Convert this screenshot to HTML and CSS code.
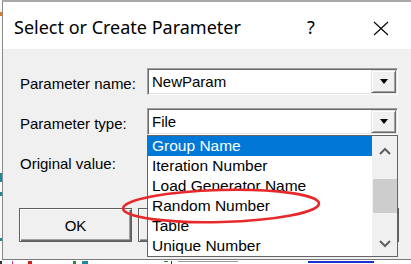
FILE: index.html
```html
<!DOCTYPE html>
<html lang="en">
<head>
  <meta charset="UTF-8" />
  <title>Select or Create Parameter</title>
  <link rel="stylesheet" href="styles.css">
</head>
<body>
<div class="screen">
  <!-- strip of the application window behind the dialog -->
  <div class="app-edge">
    <span class="mark orange"></span>
    <span class="mark teal first"></span>
    <span class="mark teal second"></span>
    <span class="mark teal third"></span>
  </div>

  <div class="dialog">
    <div class="titlebar">
      <span class="title">Select or Create Parameter</span>
      <span class="help">?</span>
      <svg class="close" width="16" height="15" viewBox="0 0 16 15">
        <path d="M1 1 L15 14 M15 1 L1 14" stroke="#000" stroke-width="1.1" fill="none"/>
      </svg>
    </div>

    <div class="content">
      <div class="form">
        <label class="label">Parameter name:</label>
        <div class="combo">
          <span class="value">NewParam</span>
          <span class="drop"><i class="tri"></i></span>
        </div>

        <label class="label">Parameter type:</label>
        <div class="combo open">
          <span class="value">File</span>
          <span class="drop"><i class="tri"></i></span>

          <!-- opened list of the combo -->
          <div class="droplist">
            <ul class="items">
              <li class="selected">Group Name</li>
              <li>Iteration Number</li>
              <li>Load Generator Name</li>
              <li>Random Number</li>
              <li>Table</li>
              <li>Unique Number</li>
            </ul>
            <div class="scroll">
              <span class="arrow up">
                <svg width="12" height="8" viewBox="0 0 12 8"><path d="M1 7 L6 2 L11 7" stroke="#606060" stroke-width="2" fill="none"/></svg>
              </span>
              <span class="track"><span class="thumb"></span></span>
              <span class="arrow down">
                <svg width="12" height="8" viewBox="0 0 12 8"><path d="M1 1 L6 6 L11 1" stroke="#606060" stroke-width="2" fill="none"/></svg>
              </span>
            </div>
          </div>
        </div>

        <label class="label">Original value:</label>
        <div class="combo">
          <span class="value"></span>
          <span class="drop"><i class="tri"></i></span>
        </div>
      </div>

      <!-- the two right buttons sit under the open list -->
      <div class="buttons">
        <button class="btn default">OK</button>
        <button class="btn" aria-label="Cancel"></button>
        <button class="btn wide" aria-label="Properties"></button>
      </div>
    </div>

    <!-- red hand drawn mark around "Random Number" -->
    <svg class="annotation" width="204" height="40" viewBox="0 0 204 40">
      <ellipse cx="100" cy="20" rx="98" ry="16" transform="rotate(-1.5 100 20)" stroke="#e8292b" stroke-width="2.6" fill="none"/>
    </svg>
  </div>

  <!-- only the top pixels of the app's status line show -->
  <div class="app-bottom">
    <span class="bit dark w2"></span>
    <span class="bit pink w1"></span>
    <span class="bit red w4"></span>
    <span class="bit green w3"></span>
    <span class="bit teal w6"></span>
    <span class="bit green far w4"></span>
    <span class="bit dark w1 gap2"></span>
    <span class="bit grey w60"></span>
    <span class="bit blue w66"></span>
  </div>
</div>
</body>
</html>
```

FILE: styles.css
```css
:root {
  --face: #f0f0f0;
  --dark: #696969;
  --shade: #a0a0a0;
  --light: #e3e3e3;
  --select: #0078d7;
  --font: "Liberation Sans", Arial, sans-serif;
}

* {
  box-sizing: border-box;
}

body {
  margin: 0;
  width: 411px;
  height: 264px;
  overflow: hidden;
  background: #ffffff;
  font-family: var(--font);
  font-size: 15px;
  color: #000;
}

.screen {
  display: grid;
  grid-template-columns: 2px 409px;
  grid-template-rows: 260px 4px;
}

/* ---------- behind the dialog ---------- */
.app-edge {
  display: flex;
  flex-direction: column;
  background: #fafafa;
}

.mark {
  display: block;
  width: 2px;
}

.mark.orange { background: #e0782a; height: 4px; margin-top: 12px; }
.mark.teal   { background: #1b8a9a; }
.mark.first  { height: 9px; margin-top: 157px; }
.mark.second { height: 4px; margin-top: 10px; }
.mark.third  { height: 3px; margin-top: 42px; }

.app-bottom {
  grid-column: 1 / 3;
  display: flex;
  align-items: flex-start;
  height: 4px;
  padding-top: 1px;
  overflow: hidden;
  background: #ffffff;
}

.bit        { display: block; height: 3px; }
.bit.dark   { background: #333; }
.bit.pink   { background: #c0308a; margin-left: 10px; }
.bit.red    { background: #d02020; margin-left: 15px; }
.bit.green  { background: #2c8a2c; margin-left: 41px; }
.bit.teal   { background: #1b8a9a; margin-left: 6px; }
.bit.far    { margin-left: 76px; height: 1px; }
.bit.gap2   { margin-left: 3px; }
.bit.grey   { background: #9a9a9a; margin-left: 6px; height: 1px; }
.bit.blue   { background: #1a2fd0; margin-left: 70px; height: 2px; }

.w1  { width: 1px; }
.w2  { width: 2px; }
.w3  { width: 3px; }
.w4  { width: 4px; }
.w6  { width: 6px; }
.w60 { width: 60px; }
.w66 { width: 66px; }

/* ---------- dialog ---------- */
.dialog {
  position: relative;
  display: flex;
  flex-direction: column;
  border-left: 1px solid #8a8a8a;
  border-top: 2px solid #a8a8a8;
  border-bottom: 1px solid #7a7a7a;
  background: var(--face);
}

.titlebar {
  display: grid;
  grid-template-columns: 293px 66px 16px;
  align-items: center;
  height: 47px;
  padding: 3px 0 0 11px;
  background: #ffffff;
  font-family: "Noto Sans", sans-serif;
  font-size: 18px;
}

.title {
  white-space: nowrap;
}

.help {
  font-size: 18px;
}

.close {
  display: block;
  margin-top: 2px;
}

.content {
  flex: 1;
  padding: 19px 0 0 17px;
}

.form {
  display: grid;
  grid-template-columns: 127px 251px;
  grid-auto-rows: 27px;
  row-gap: 13px;
  align-items: center;
}

.label {
  padding-top: 3px;
}

/* sunken combo box */
.combo {
  position: relative;
  display: flex;
  align-items: center;
  height: 27px;
  background: #fff;
  border-top: 1px solid var(--shade);
  border-left: 1px solid var(--shade);
  border-right: 1px solid #fff;
  border-bottom: 1px solid #fff;
  box-shadow: inset 1px 1px 0 var(--dark), inset -1px -1px 0 var(--light);
}

.combo .value {
  flex: 1;
  padding-left: 4px;
}

.drop {
  display: flex;
  align-items: center;
  justify-content: center;
  width: 25px;
  height: 23px;
  margin-right: 1px;
  background: var(--face);
  border-top: 1px solid var(--light);
  border-left: 1px solid var(--light);
  border-right: 1px solid var(--dark);
  border-bottom: 1px solid var(--dark);
  box-shadow: inset 1px 1px 0 #fff, inset -1px -1px 0 var(--shade);
}

.tri {
  width: 0;
  height: 0;
  border-left: 4.5px solid transparent;
  border-right: 4.5px solid transparent;
  border-top: 5px solid #000;
}

/* opened list */
.droplist {
  position: absolute;
  top: calc(100% + 1px);
  left: -1px;
  z-index: 2;
  display: grid;
  grid-template-columns: 1fr 25px;
  width: 251px;
  height: 122px;
  background: #fff;
  border: 1px solid #646464;
}

.items {
  list-style: none;
  margin: 0;
  padding: 0;
  font-size: 15.5px;
}

.items li {
  height: 20px;
  line-height: 20px;
  padding-left: 4px;
  white-space: nowrap;
}

.items li.selected {
  background: var(--select);
  color: #fff;
}

.scroll {
  display: flex;
  flex-direction: column;
  background: var(--face);
}

.arrow {
  display: flex;
  align-items: center;
  justify-content: center;
}

.arrow.up   { height: 30px; }
.arrow.down { height: 24px; }

.track {
  flex: 1;
}

.thumb {
  display: block;
  height: 34px;
  margin: 13px 0 0 1px;
  background: #cdcdcd;
}

/* buttons */
.buttons {
  display: flex;
  gap: 6px;
  margin: 33px 0 0 -1px;
}

.btn {
  width: 113px;
  height: 34px;
  padding: 0;
  font-family: var(--font);
  font-size: 15px;
  color: #000;
  background: var(--face);
  border: 1px solid #5f5f5f;
  box-shadow: inset 1px 1px 0 #fff, inset -1px -1px 0 var(--dark), inset -2px -2px 0 var(--shade);
}

.btn.wide {
  width: 142px;
}

.annotation {
  position: absolute;
  left: 118px;
  top: 184px;
  z-index: 3;
}
```
